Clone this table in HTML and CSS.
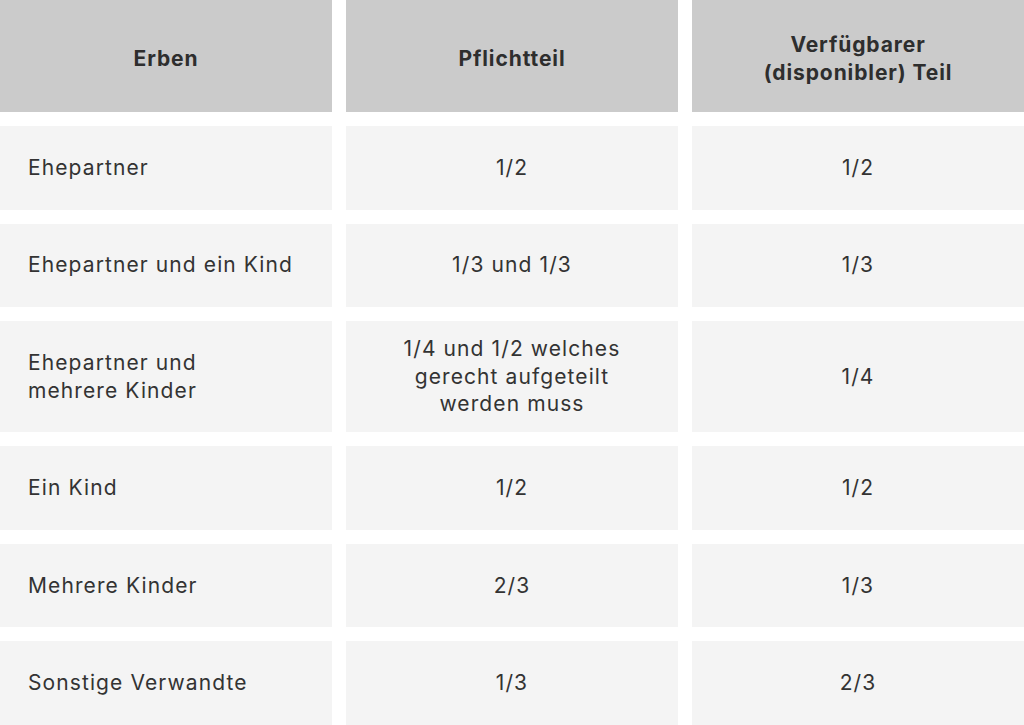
FILE: index.html
```html
<!DOCTYPE html>
<html lang="de">
<head>
<meta charset="utf-8">
<link rel="stylesheet" href="styles.css">
</head>
<body>
<div class="table">
  <div class="cell head">Erben</div>
  <div class="cell head">Pflichtteil</div>
  <div class="cell head">Verfügbarer<br>(disponibler) Teil</div>

  <div class="cell first">Ehepartner</div>
  <div class="cell">1/2</div>
  <div class="cell">1/2</div>

  <div class="cell first">Ehepartner und ein Kind</div>
  <div class="cell">1/3 und 1/3</div>
  <div class="cell">1/3</div>

  <div class="cell first">Ehepartner und<br>mehrere Kinder</div>
  <div class="cell">1/4 und 1/2 welches<br>gerecht aufgeteilt<br>werden muss</div>
  <div class="cell">1/4</div>

  <div class="cell first">Ein Kind</div>
  <div class="cell">1/2</div>
  <div class="cell">1/2</div>

  <div class="cell first">Mehrere Kinder</div>
  <div class="cell">2/3</div>
  <div class="cell">1/3</div>

  <div class="cell first">Sonstige Verwandte</div>
  <div class="cell">1/3</div>
  <div class="cell">2/3</div>
</div>
</body>
</html>
```
FILE: styles.css
```css
html, body {
  margin: 0;
  padding: 0;
  background: #ffffff;
}
body {
  font-family: Inter, "Open Sans", "Liberation Sans", sans-serif;
  color: #333333;
}
.table {
  display: grid;
  grid-template-columns: 332px 332px 332px;
  grid-template-rows: 112px;
  grid-auto-rows: minmax(83.5px, auto);
  column-gap: 14px;
  row-gap: 14px;
  width: 1024px;
}
.cell {
  background: #f4f4f4;
  padding: 14px 16px;
  font-size: 21px;
  line-height: 27.7px;
  letter-spacing: 1.1px;
  text-align: center;
  display: flex;
  align-items: center;
  justify-content: center;
}
.cell.first {
  justify-content: flex-start;
  text-align: left;
  padding-left: 28px;
}
.head {
  background: #cbcbcb;
  font-weight: 700;
  color: #2e2e2e;
  letter-spacing: 0.9px;
  padding-top: 18px;
  padding-bottom: 12px;
}
```
